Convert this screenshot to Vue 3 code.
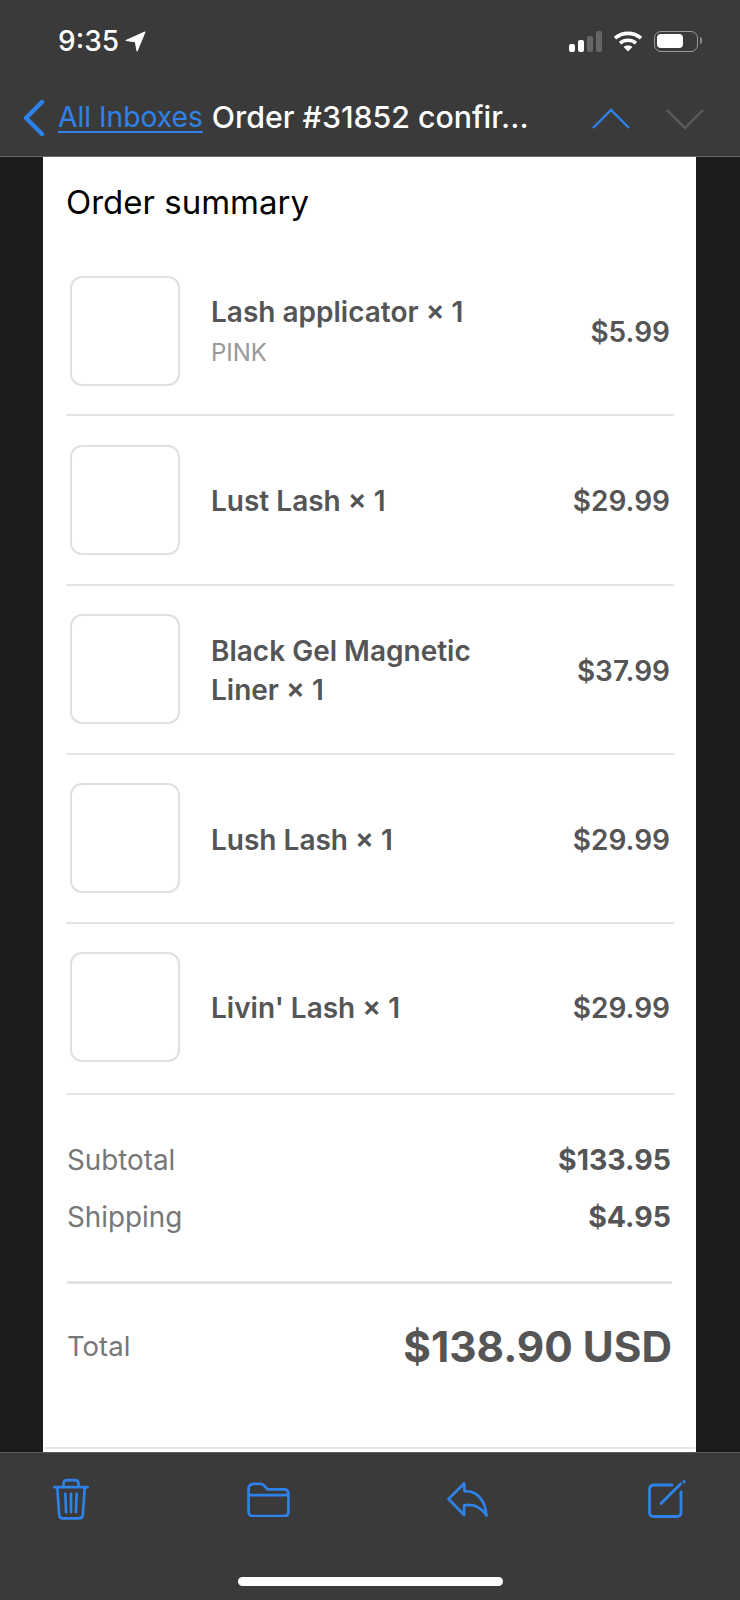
<template>
  <div class="phone">
    <header class="top">
      <div class="status">
        <div class="clock">
          <span>9:35</span>
          <svg width="21" height="21" viewBox="0 0 20 20"><path d="M19 1 1 9l8.800 1.200L11.500 19z" fill="#fff" stroke="#fff" stroke-linejoin="round" /></svg>
        </div>
        <div class="indicators">
          <div class="signal">
            <i v-for="(bar, n) in signalBars" :key="n" :class="{ off: bar.off }" :style="{ height: bar.h + 'px' }"></i>
          </div>
          <svg width="30" height="22" viewBox="0 0 30 22" fill="none" stroke="#fff" stroke-width="3.600">
            <path d="M2 8.200c7.400-6.400 18.600-6.400 26 0" />
            <path d="M7 13.200c4.600-3.900 11.400-3.900 16 0" />
            <path d="M15 21.500l-4.400-4.500c2.500-1.900 6.300-1.900 8.800 0z" fill="#fff" stroke="none" />
          </svg>
          <div class="battery"><b></b></div>
        </div>
      </div>
      <div class="nav">
        <svg class="back" width="24" height="38" viewBox="0 0 24 38" fill="none" stroke="#2e82e8" stroke-width="4.400" stroke-linecap="round" stroke-linejoin="round"><path d="M20 3 4 19l16 16" /></svg>
        <a class="inbox">All Inboxes</a>
        <span class="subject">Order #31852 confir...</span>
        <svg class="arrow up" width="38" height="22" viewBox="0 0 38 22" fill="none" stroke="#2e82e8" stroke-width="2.400"><path d="M1 20 19 2l18 18" /></svg>
        <svg class="arrow" width="38" height="22" viewBox="0 0 38 22" fill="none" stroke="#5c5c5e" stroke-width="2.400"><path d="M1 2l18 18L37 2" /></svg>
      </div>
    </header>

    <main class="content">
      <section class="card">
        <h2>Order summary</h2>
        <div class="items">
          <div v-for="item in items" :key="item.name" class="item">
            <div class="thumb"></div>
            <div class="info">
              <div class="name">{{ item.name }}</div>
              <div v-if="item.variant" class="variant">{{ item.variant }}</div>
            </div>
            <div class="price">{{ item.price }}</div>
          </div>
        </div>
        <div class="totals">
          <div class="line"><span>Subtotal</span><strong>$133.95</strong></div>
          <div class="line"><span>Shipping</span><strong>$4.95</strong></div>
        </div>
        <div class="grand">
          <span>Total</span>
          <strong>$138.90 USD</strong>
        </div>
        <div class="foot-line"></div>
      </section>
    </main>

    <footer class="toolbar">
      <div class="tools">
        <svg width="36" height="42" viewBox="0 0 38 44" fill="none" stroke="#2e82e8" stroke-width="2.800" stroke-linecap="round" stroke-linejoin="round">
          <path d="M1.500 9.500h35" />
          <path d="M11 9V6c0-2.500 1.500-4 4-4h8c2.500 0 4 1.500 4 4v3" />
          <path d="M4.500 10l2 28.500c.2 2.500 1.500 4 4 4h17c2.500 0 3.800-1.500 4-4l2-28.500" />
          <path d="M13 16.500l.8 19.500M19 16.500V36M25 16.500 24.200 36" />
        </svg>
        <svg width="43" height="35" viewBox="0 0 44 36" fill="none" stroke="#2e82e8" stroke-width="2.800" stroke-linejoin="round">
          <path d="M1.500 7c0-3 2-5 5-5h7.500c2 0 3 .8 4.200 2.200L21 7.500h17c2.800 0 4.500 1.700 4.500 4.500v18.500c0 2.800-1.700 4.500-4.500 4.500H6c-2.800 0-4.500-1.700-4.500-4.500z" />
          <path d="M1.500 13.500h41" />
        </svg>
        <svg class="reply" width="41" height="35" viewBox="0 0 42 36" fill="none" stroke="#2e82e8" stroke-width="2.800" stroke-linecap="round" stroke-linejoin="round">
          <path d="M17.500 1.500 1.500 17.500 17.500 34V24C27 22.500 35 26 40.500 34.500 39.500 19 31 9 18 9.500z" />
        </svg>
        <svg width="38" height="38" viewBox="0 0 38 38" fill="none" stroke="#2e82e8" stroke-width="2.800" stroke-linecap="round" stroke-linejoin="round">
          <path d="M24 5H6C3 5 1.500 6.500 1.500 9v23.500c0 2.500 1.500 4 4.500 4h23c2.500 0 4-1.500 4-4V12" />
          <path d="M13 23.500 32.500 4" stroke-width="3" />
          <circle cx="36" cy="1.800" r="1.700" fill="#2e82e8" stroke="none" />
        </svg>
      </div>
      <div class="home"></div>
    </footer>
  </div>
</template>

<script setup>
const signalBars = [
  { h: 8 },
  { h: 12 },
  { h: 16, off: true },
  { h: 21, off: true }
]

const items = [
  { name: 'Lash applicator × 1', variant: 'PINK', price: '$5.99' },
  { name: 'Lust Lash × 1', price: '$29.99' },
  { name: 'Black Gel Magnetic Liner × 1', price: '$37.99' },
  { name: 'Lush Lash × 1', price: '$29.99' },
  { name: "Livin' Lash × 1", price: '$29.99' }
]
</script>

<style>
body {
  margin: 0;
  background: #1c1c1e;
}
</style>

<style scoped>
.phone {
  width: 740px;
  height: 1600px;
  display: flex;
  flex-direction: column;
  overflow: hidden;
  font-family: Inter, "Liberation Sans", sans-serif;
  background: #1c1c1e;
}

.top {
  height: 157px;
  flex: none;
  box-sizing: border-box;
  background: #3a3a3b;
  border-bottom: 1px solid #6a6a6b;
}

.status {
  height: 80px;
  box-sizing: border-box;
  padding: 23px 42px 0 58px;
  display: flex;
  justify-content: space-between;
  align-items: flex-start;
}

.clock {
  display: flex;
  align-items: center;
  gap: 6px;
  color: #fff;
  font-size: 28px;
  font-weight: 500;
  line-height: 36px;
}

.indicators {
  display: flex;
  align-items: center;
  gap: 11px;
  height: 36px;
}

.signal {
  display: flex;
  align-items: flex-end;
  gap: 3px;
  height: 21px;
}

.signal i {
  width: 6px;
  border-radius: 2px;
  background: #fff;
}

.signal i.off {
  background: #666;
}

.battery {
  position: relative;
  width: 44px;
  height: 21px;
  box-sizing: border-box;
  padding: 2px;
  border: 1.500px solid #9a9a9a;
  border-radius: 7px;
}

.battery b {
  display: block;
  width: 26px;
  height: 14px;
  background: #fff;
  border-radius: 4px;
}

.battery::after {
  content: "";
  position: absolute;
  right: -5px;
  top: 5px;
  width: 2px;
  height: 7px;
  background: #8a8a8a;
  border-radius: 0 2px 2px 0;
}

.nav {
  display: flex;
  align-items: center;
  height: 74px;
  padding-left: 22px;
}

.back {
  flex: none;
  margin-top: 2px;
  margin-right: 12px;
}

.inbox {
  color: #2e82e8;
  font-size: 28.200px;
  text-decoration: underline;
  text-underline-offset: 4px;
  text-decoration-thickness: 2px;
  white-space: nowrap;
}

.subject {
  margin-left: 9px;
  flex: 1;
  color: #fff;
  font-size: 30.300px;
  font-weight: 500;
  white-space: nowrap;
}

.arrow {
  flex: none;
  margin-top: 4px;
  margin-right: 36px;
}

.content {
  flex: 1;
  min-height: 0;
  display: flex;
  justify-content: flex-start;
  padding-left: 43px;
}

.card {
  width: 653px;
  height: 100%;
  box-sizing: border-box;
  padding: 24px 22px 0 23px;
  background: #fff;
  display: flex;
  flex-direction: column;
}

h2 {
  margin: 0;
  height: 66px;
  color: #000;
  font-size: 33px;
  font-weight: 400;
  line-height: 42px;
}

.item {
  height: 169.250px;
  box-sizing: border-box;
  display: flex;
  align-items: center;
  padding: 0 4px;
  border-bottom: 2px solid #e4e4e4;
}

.item:last-child {
  height: 171px;
  padding-bottom: 4px;
}

.thumb {
  width: 110px;
  height: 110px;
  box-sizing: border-box;
  flex: none;
  border: 2px solid #e0e0e0;
  border-radius: 12px;
  margin-right: 31px;
}

.info {
  flex: 1;
  min-width: 0;
  margin-top: 4px;
}

.name {
  color: #555;
  font-size: 28px;
  font-weight: 600;
  line-height: 39px;
  max-width: 290px;
}

.variant {
  color: #999;
  font-size: 24px;
  line-height: 41px;
}

.price {
  margin-top: 3px;
  color: #555;
  font-size: 28px;
  font-weight: 600;
}

.totals {
  padding: 43px 3px 0 1px;
  display: flex;
  flex-direction: column;
  gap: 14px;
}

.line {
  display: flex;
  justify-content: space-between;
  align-items: center;
  height: 43px;
  color: #777;
  font-size: 27.800px;
}

.line strong {
  font-size: 28.500px;
}

.line strong,
.grand strong {
  color: #555;
  font-weight: 700;
}

.grand {
  margin: 43px 2px 0 1px;
  height: 124px;
  display: flex;
  justify-content: space-between;
  align-items: center;
  border-top: 3px solid #e4e4e4;
  color: #777;
  font-size: 27.500px;
}

.grand strong {
  font-size: 42.300px;
}

.foot-line {
  height: 2px;
  background: #e4e4e4;
  margin: 39px -21px 0 -21px;
}

.toolbar {
  height: 148px;
  flex: none;
  box-sizing: border-box;
  background: #3a3a3b;
  border-top: 1px solid #5a5a5b;
  position: relative;
}

.tools {
  display: flex;
  justify-content: space-between;
  align-items: center;
  padding: 0 54px 0 53px;
  height: 92px;
}

.reply {
  margin-right: 2px;
}

.home {
  position: absolute;
  left: 238px;
  bottom: 14px;
  width: 265px;
  height: 9px;
  border-radius: 5px;
  background: #fff;
}
</style>
